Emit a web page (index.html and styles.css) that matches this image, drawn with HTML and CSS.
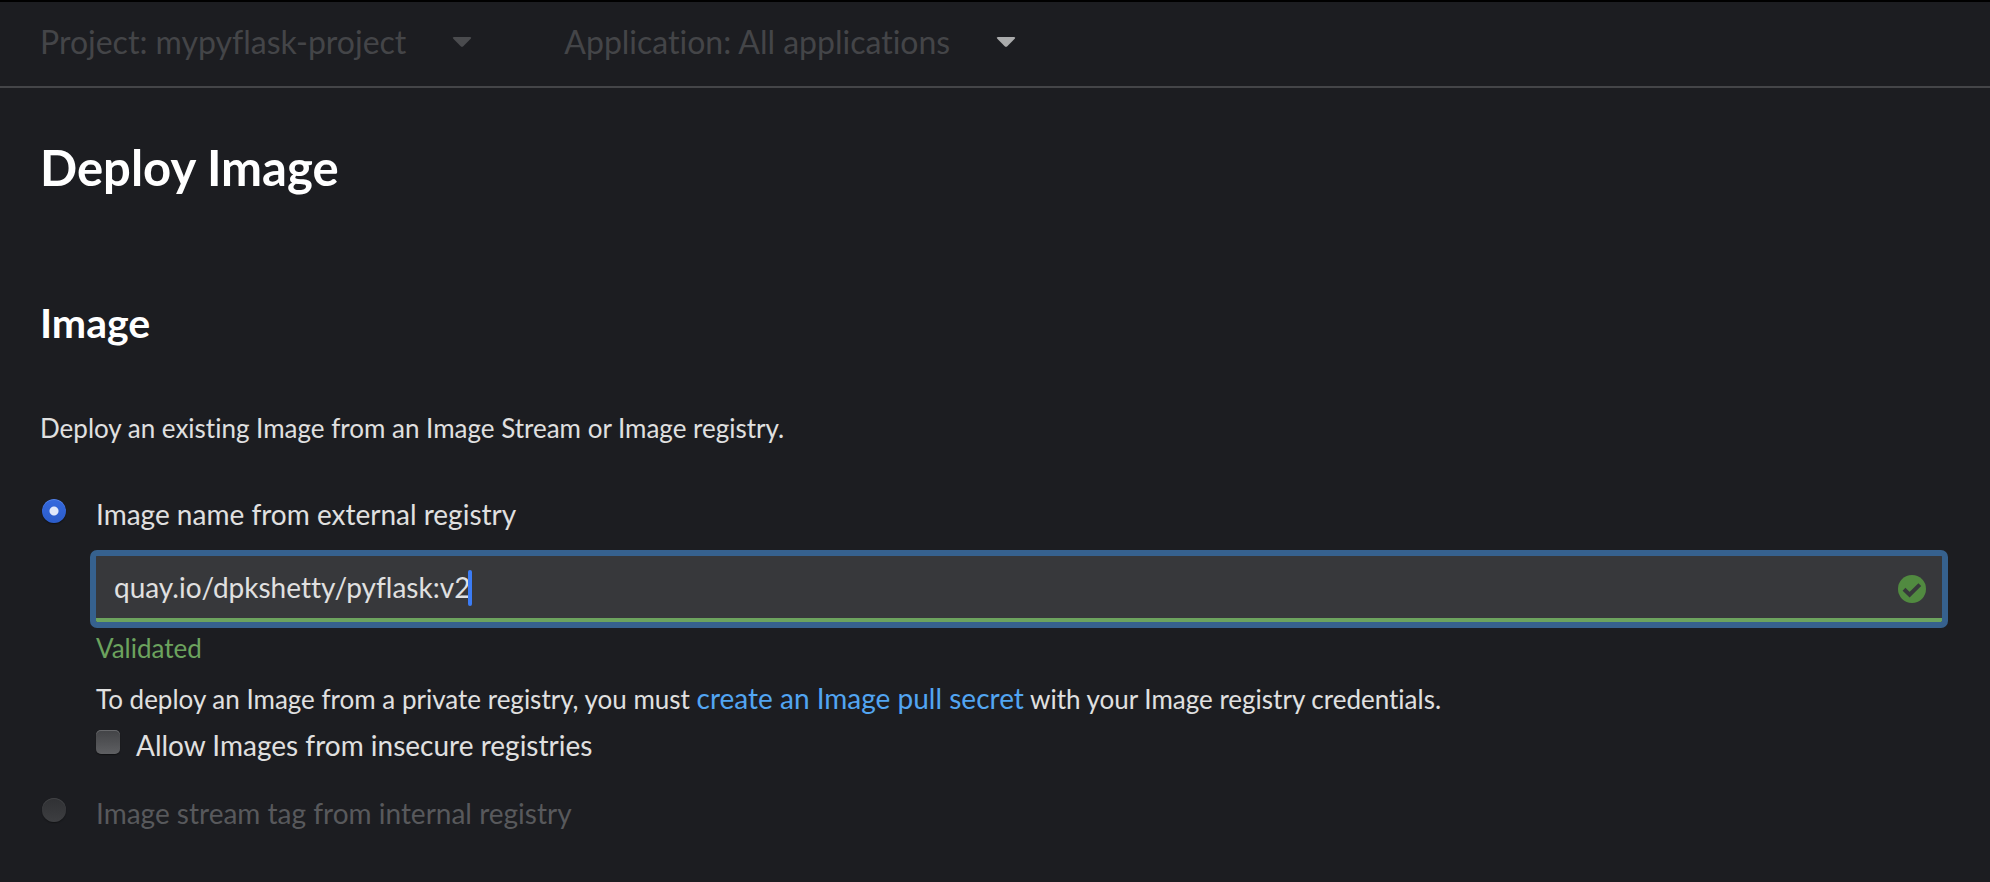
FILE: index.html
```html
<!DOCTYPE html>
<html lang="en">
<head>
<meta charset="utf-8">
<meta name="viewport" content="width=device-width, initial-scale=1">
<title>Deploy Image</title>
<link rel="stylesheet" href="styles.css">
</head>
<body>
<header class="context-bar">
  <button type="button" class="context-toggle" disabled>
    <span>Project: mypyflask-project</span>
    <svg class="caret" viewBox="0 0 20 12" aria-hidden="true"><path d="M2 1H18Q20 1 18.700 2.700L11.300 10.200Q10 11.400 8.700 10.200L1.300 2.700Q0 1 2 1Z"/></svg>
  </button>
  <button type="button" class="context-toggle">
    <span>Application: All applications</span>
    <svg class="caret caret-active" viewBox="0 0 20 12" aria-hidden="true"><path d="M2 1H18Q20 1 18.700 2.700L11.300 10.200Q10 11.400 8.700 10.200L1.300 2.700Q0 1 2 1Z"/></svg>
  </button>
</header>
<main class="page">
  <h1 class="page-title">Deploy Image</h1>
  <form class="image-form">
    <h2 class="section-title">Image</h2>
    <p class="help">Deploy an existing Image from an Image Stream or Image registry.</p>
    <div class="option">
      <input class="radio" type="radio" name="source" id="external" checked>
      <label class="label" for="external">Image name from external registry</label>
    </div>
    <div class="option-body">
      <div class="field">
        <input class="text-input" type="text" value="quay.io/dpkshetty/pyflask:v2" aria-label="Image name from external registry" spellcheck="false">
        <span class="text-cursor"></span>
        <svg class="valid-icon" viewBox="0 0 28 28" aria-hidden="true"><circle cx="14" cy="14" r="14"/><path d="M6 14.200L11.600 19.600L21.800 9.600"/></svg>
      </div>
      <p class="validated">Validated</p>
      <p class="secret-note">To deploy an Image from a private registry, you must <a class="link" href="#">create an Image pull secret</a> with your Image registry credentials.</p>
      <div class="check-row">
        <input class="checkbox" type="checkbox" id="insecure">
        <label class="label" for="insecure">Allow Images from insecure registries</label>
      </div>
    </div>
    <div class="option option-next">
      <input class="radio" type="radio" name="source" id="internal" disabled>
      <label class="label label-disabled" for="internal">Image stream tag from internal registry</label>
    </div>
  </form>
</main>
</body>
</html>
```
FILE: styles.css
```css
* {
  box-sizing: border-box;
}

body {
  margin: 0;
  background: #1c1d21;
  color: #e0e0e0;
  font-family: Lato, "Open Sans", sans-serif;
  font-size: 26px;
  font-variant-ligatures: none;
  line-height: 40px;
}

h1, h2, p {
  margin: 0;
}

.context-bar {
  display: flex;
  align-items: center;
  gap: 92px;
  padding: 16px 40px 20px;
  border-top: 2px solid #000;
  border-bottom: 2px solid #444548;
}

.context-toggle {
  display: flex;
  align-items: center;
  gap: 46px;
  padding: 0;
  border: 0;
  background: none;
  color: #444548;
  font: inherit;
  font-variant-ligatures: none;
  font-size: 32px;
  line-height: 48px;
}

.caret {
  width: 20px;
  height: 12px;
  fill: #4a4b4e;
}

.caret-active {
  fill: #aaabac;
}

.page {
  padding: 47px 40px;
}

.page-title {
  color: #fff;
  font-size: 49px;
  font-weight: 700;
  line-height: 64px;
}

.section-title {
  margin-top: 96px;
  color: #fff;
  font-size: 41px;
  font-weight: 700;
  line-height: 56px;
}

.help {
  margin-top: 57px;
}

.option {
  display: flex;
  align-items: flex-start;
  gap: 30px;
  margin-top: 46px;
}

.option-next {
  margin-top: 28px;
}

.radio,
.checkbox {
  appearance: none;
  flex: none;
  width: 24px;
  height: 24px;
  margin: 5px 0 0;
  background: linear-gradient(#424346, #5e5f62);
  box-shadow: inset 0 1px 0 #67686b, 0 1px 1px #101113;
}

.radio {
  margin-left: 2px;
  border-radius: 50%;
}

.radio:checked {
  background: radial-gradient(circle, #e0e8fa 0 4px, transparent 5px), linear-gradient(#3569de, #2b5cc9);
  box-shadow: inset 0 1px 0 #5684e6, 0 1px 1px #101113;
}

.radio:disabled {
  background: linear-gradient(#303134, #3d3e41);
  box-shadow: inset 0 1px 0 #414245, 0 1px 1px #131416;
}

.checkbox {
  border-radius: 5px;
}

.label {
  font-size: 28px;
}

.label-disabled {
  color: #58595c;
}

.option-body {
  padding: 22px 8px 0 56px;
}

.field {
  position: relative;
}

.text-input {
  display: block;
  width: 100%;
  height: 66px;
  padding: 0 64px 0 18px;
  border: 0;
  border-bottom: 4px solid #6ca35e;
  border-radius: 1px;
  outline: 6px solid #36618e;
  background: #37383b;
  color: #e0e0e0;
  caret-color: transparent;
  font: inherit;
  font-variant-ligatures: none;
  font-size: 28px;
}

.text-cursor {
  position: absolute;
  top: 14px;
  left: 372px;
  width: 4px;
  height: 36px;
  border-radius: 2px;
  background: #3b7cf5;
}

.valid-icon {
  position: absolute;
  top: 19px;
  right: 16px;
  width: 28px;
  height: 28px;
  fill: #518a40;
}

.valid-icon path {
  fill: none;
  stroke: #37383b;
  stroke-width: 4;
}

.validated {
  margin-top: 6px;
  color: #6ca35e;
}

.secret-note {
  margin-top: 10px;
}

.link {
  color: #52a5f2;
  font-size: 28px;
  text-decoration: none;
}

.check-row {
  display: flex;
  align-items: flex-start;
  gap: 16px;
  margin-top: 6px;
}
```
